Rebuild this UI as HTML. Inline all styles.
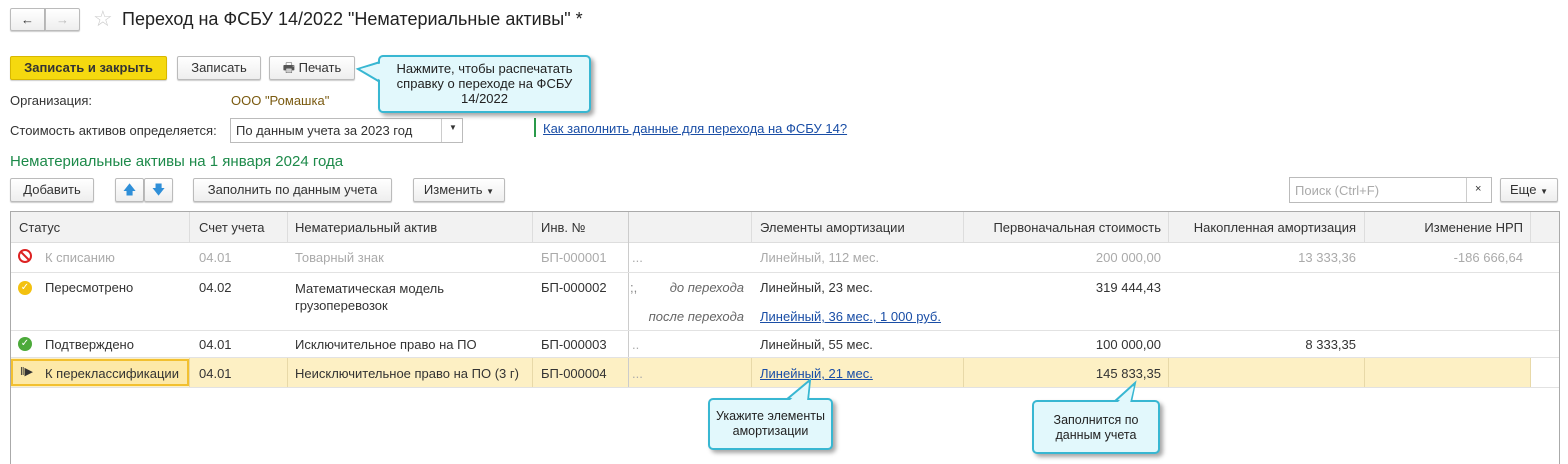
<!DOCTYPE html><html><head><meta charset="utf-8"><style>
*{box-sizing:border-box}body{margin:0;width:1568px;height:464px;background:#fff;font-family:"Liberation Sans",Arial,sans-serif;font-size:13px;color:#333;position:relative;overflow:hidden}
.a{position:absolute;white-space:nowrap}
.btn{position:absolute;height:24px;border:1px solid #bbb;border-radius:2px;background:linear-gradient(#fff,#eee);box-shadow:0 1px 1px rgba(0,0,0,.2);text-align:center;line-height:22px;color:#333}
.cell{position:absolute;white-space:nowrap}
.g{color:#aaa}
.lnk{color:#1a4ea6;text-decoration:underline}
.call{position:absolute;background:#e2f8fc;border:2px solid #38b7d2;border-radius:5px;box-shadow:3px 3px 4px rgba(0,0,0,.35);text-align:center;color:#222;font-size:12.5px;line-height:15px}
</style></head><body>
<div class="btn" style="left:10px;top:8px;width:35px;height:23px;border-radius:2px 0 0 2px">&#8592;</div>
<div class="btn" style="left:45px;top:8px;width:35px;height:23px;color:#bbb;border-radius:0 2px 2px 0">&#8594;</div>
<div class="a" style="left:93px;top:6px;font-size:22px;color:#ccc">&#9734;</div>
<div class="a" style="left:122px;top:9px;font-size:18px;color:#222">Переход на ФСБУ 14/2022 "Нематериальные активы" *</div>

<div class="btn" style="left:10px;top:56px;width:157px;background:#f5d90f;border-color:#d8b800;font-weight:bold;color:#333">Записать и закрыть</div>
<div class="btn" style="left:177px;top:56px;width:84px">Записать</div>
<div class="btn" style="left:269px;top:56px;width:86px"><span style="color:#555">&#128438;</span> Печать</div>

<div class="a" style="left:10px;top:93px">Организация:</div>
<div class="a" style="left:231px;top:93px;color:#7a5a10">ООО "Ромашка"</div>
<div class="a" style="left:10px;top:123px">Стоимость активов определяется:</div>
<div class="a" style="left:230px;top:118px;width:233px;height:25px;border:1px solid #bbb;background:#fff;padding:4px 5px">По данным учета за 2023 год</div>
<div class="a" style="left:441px;top:119px;width:1px;height:23px;background:#ccc"></div>
<div class="a" style="left:449px;top:123px;font-size:8px">&#9660;</div>
<div class="a" style="left:534px;top:118px;width:2px;height:19px;background:#2a9a4a"></div>
<div class="a lnk" style="left:543px;top:121px">Как заполнить данные для перехода на ФСБУ 14?</div>

<div class="a" style="left:10px;top:153px;font-size:15px;color:#1d8a4a">Нематериальные активы на 1 января 2024 года</div>
<div class="btn" style="left:10px;top:178px;width:84px">Добавить</div>
<div class="btn" style="left:115px;top:178px;width:29px;color:#2f8fd8">&#129093;</div>
<div class="btn" style="left:144px;top:178px;width:29px;color:#2f8fd8">&#129095;</div>
<div class="btn" style="left:193px;top:178px;width:199px">Заполнить по данным учета</div>
<div class="btn" style="left:413px;top:178px;width:92px">Изменить <span style="font-size:8px">&#9660;</span></div>
<div class="a" style="left:1289px;top:177px;width:203px;height:26px;border:1px solid #bbb;background:#fff;color:#aaa;padding:5px 5px">Поиск (Ctrl+F)</div>
<div class="a" style="left:1466px;top:178px;width:1px;height:24px;background:#ccc"></div>
<div class="a" style="left:1475px;top:183px;font-size:11px">×</div>
<div class="btn" style="left:1500px;top:178px;width:58px">Еще <span style="font-size:8px">&#9660;</span></div>

<!-- table -->
<div class="a" style="left:10px;top:211px;width:1550px;height:253px;border:1px solid #aaa;border-bottom:none"></div>
<div class="a" style="left:11px;top:212px;width:1548px;height:31px;background:#f2f2f2;border-bottom:1px solid #ddd"></div>
<div class="a" style="left:11px;top:358px;width:1519px;height:29px;background:#fdf0c4"></div>
<div class="a" style="left:11px;top:359px;width:178px;height:27px;border:2px solid #f2c030;background:#fde9a8"></div>
<div class="a" style="left:189px;top:212px;width:1px;height:31px;background:#ddd"></div>
<div class="a" style="left:287px;top:212px;width:1px;height:31px;background:#ddd"></div>
<div class="a" style="left:532px;top:212px;width:1px;height:31px;background:#ddd"></div>
<div class="a" style="left:628px;top:212px;width:1px;height:175px;background:#ccc"></div>
<div class="a" style="left:751px;top:212px;width:1px;height:31px;background:#ddd"></div>
<div class="a" style="left:963px;top:212px;width:1px;height:31px;background:#ddd"></div>
<div class="a" style="left:1168px;top:212px;width:1px;height:31px;background:#ddd"></div>
<div class="a" style="left:1364px;top:212px;width:1px;height:31px;background:#ddd"></div>
<div class="a" style="left:1530px;top:212px;width:1px;height:31px;background:#ddd"></div>
<div class="a" style="left:189px;top:358px;width:1px;height:29px;background:#e8d9a8"></div>
<div class="a" style="left:287px;top:358px;width:1px;height:29px;background:#e8d9a8"></div>
<div class="a" style="left:532px;top:358px;width:1px;height:29px;background:#e8d9a8"></div>
<div class="a" style="left:751px;top:358px;width:1px;height:29px;background:#e8d9a8"></div>
<div class="a" style="left:963px;top:358px;width:1px;height:29px;background:#e8d9a8"></div>
<div class="a" style="left:1168px;top:358px;width:1px;height:29px;background:#e8d9a8"></div>
<div class="a" style="left:1364px;top:358px;width:1px;height:29px;background:#e8d9a8"></div>
<div class="a" style="left:1530px;top:358px;width:1px;height:29px;background:#e8d9a8"></div>
<div class="a" style="left:11px;top:272px;width:1548px;height:1px;background:#e2e2e2"></div>
<div class="a" style="left:11px;top:330px;width:1548px;height:1px;background:#e2e2e2"></div>
<div class="a" style="left:11px;top:357px;width:1548px;height:1px;background:#e2e2e2"></div>
<div class="a" style="left:11px;top:387px;width:1548px;height:1px;background:#e2e2e2"></div>

<div class="cell" style="left:19px;top:220px">Статус</div>
<div class="cell" style="left:199px;top:220px">Счет учета</div>
<div class="cell" style="left:295px;top:220px">Нематериальный актив</div>
<div class="cell" style="left:541px;top:220px">Инв. №</div>
<div class="cell" style="left:760px;top:220px">Элементы амортизации</div>
<div class="cell" style="left:963px;top:220px;width:198px;text-align:right">Первоначальная стоимость</div>
<div class="cell" style="left:1168px;top:220px;width:188px;text-align:right">Накопленная амортизация</div>
<div class="cell" style="left:1364px;top:220px;width:159px;text-align:right">Изменение НРП</div>

<div class="cell" style="left:18px;top:249px;width:14px;height:14px;border:2px solid #d22;border-radius:50%"></div>
<div class="cell" style="left:19px;top:255px;width:12px;height:2px;background:#d22;transform:rotate(45deg)"></div>
<div class="cell g" style="left:45px;top:250px">К списанию</div>
<div class="cell g" style="left:199px;top:250px">04.01</div>
<div class="cell g" style="left:295px;top:250px">Товарный знак</div>
<div class="cell g" style="left:541px;top:250px">БП-000001</div>
<div class="cell g" style="left:632px;top:250px">...</div>
<div class="cell g" style="left:760px;top:250px">Линейный, 112 мес.</div>
<div class="cell g" style="left:963px;top:250px;width:198px;text-align:right">200 000,00</div>
<div class="cell g" style="left:1168px;top:250px;width:188px;text-align:right">13 333,36</div>
<div class="cell g" style="left:1364px;top:250px;width:159px;text-align:right">-186 666,64</div>

<div class="cell" style="left:18px;top:281px;width:14px;height:14px;background:#f3c10f;border-radius:50%;color:#fff;font-size:10px;text-align:center;line-height:14px">&#10003;</div>
<div class="cell" style="left:45px;top:280px">Пересмотрено</div>
<div class="cell" style="left:199px;top:280px">04.02</div>
<div class="cell" style="left:295px;top:280px;line-height:17px">Математическая модель<br>грузоперевозок</div>
<div class="cell" style="left:541px;top:280px">БП-000002</div>
<div class="cell" style="left:630px;top:280px;color:#888">;,</div>
<div class="cell" style="left:628px;top:280px;width:116px;text-align:right;font-style:italic;color:#666">до перехода</div>
<div class="cell" style="left:628px;top:309px;width:116px;text-align:right;font-style:italic;color:#666">после перехода</div>
<div class="cell" style="left:760px;top:280px">Линейный, 23 мес.</div>
<div class="cell lnk" style="left:760px;top:309px">Линейный, 36 мес., 1 000 руб.</div>
<div class="cell" style="left:963px;top:280px;width:198px;text-align:right">319 444,43</div>

<div class="cell" style="left:18px;top:337px;width:14px;height:14px;background:#4caa3a;border-radius:50%;color:#fff;font-size:10px;text-align:center;line-height:14px">&#10003;</div>
<div class="cell" style="left:45px;top:337px">Подтверждено</div>
<div class="cell" style="left:199px;top:337px">04.01</div>
<div class="cell" style="left:295px;top:337px">Исключительное право на ПО</div>
<div class="cell" style="left:541px;top:337px">БП-000003</div>
<div class="cell g" style="left:632px;top:337px">..</div>
<div class="cell" style="left:760px;top:337px">Линейный, 55 мес.</div>
<div class="cell" style="left:963px;top:337px;width:198px;text-align:right">100 000,00</div>
<div class="cell" style="left:1168px;top:337px;width:188px;text-align:right">8 333,35</div>

<div class="cell" style="left:20px;top:365px;font-size:11px;color:#333">&#8214;&#9654;</div>
<div class="cell" style="left:45px;top:366px">К переклассификации</div>
<div class="cell" style="left:199px;top:366px">04.01</div>
<div class="cell" style="left:295px;top:366px">Неисключительное право на ПО (3 г)</div>
<div class="cell" style="left:541px;top:366px">БП-000004</div>
<div class="cell g" style="left:632px;top:366px">...</div>
<div class="cell lnk" style="left:760px;top:366px">Линейный, 21 мес.</div>
<div class="cell" style="left:963px;top:366px;width:198px;text-align:right">145 833,35</div>

<!-- callouts -->
<svg class="a" style="left:0;top:0" width="1568" height="464">
<polygon points="358,69 380,62 380,82" fill="#e2f8fc" stroke="#38b7d2" stroke-width="2"/>
<polygon points="810,380 786,400 808,400" fill="#e2f8fc" stroke="#38b7d2" stroke-width="2"/>
<polygon points="1135,383 1114,402 1131,402" fill="#e2f8fc" stroke="#38b7d2" stroke-width="2"/>
</svg>
<div class="call" style="left:378px;top:55px;width:213px;height:58px;padding-top:4px;font-size:13px">Нажмите, чтобы распечатать<br>справку о переходе на ФСБУ<br>14/2022</div>
<div class="call" style="left:708px;top:398px;width:125px;height:52px;padding-top:9px">Укажите элементы<br>амортизации</div>
<div class="call" style="left:1032px;top:400px;width:128px;height:54px;padding-top:11px">Заполнится по<br>данным учета</div>
<svg class="a" style="left:0;top:0" width="1568" height="464">
<polygon points="360,69 382,63 382,81" fill="#e2f8fc"/>
<polygon points="809,383 789,401 807,401" fill="#e2f8fc"/>
<polygon points="1134,386 1117,403 1130,403" fill="#e2f8fc"/>
</svg>
</body></html>
